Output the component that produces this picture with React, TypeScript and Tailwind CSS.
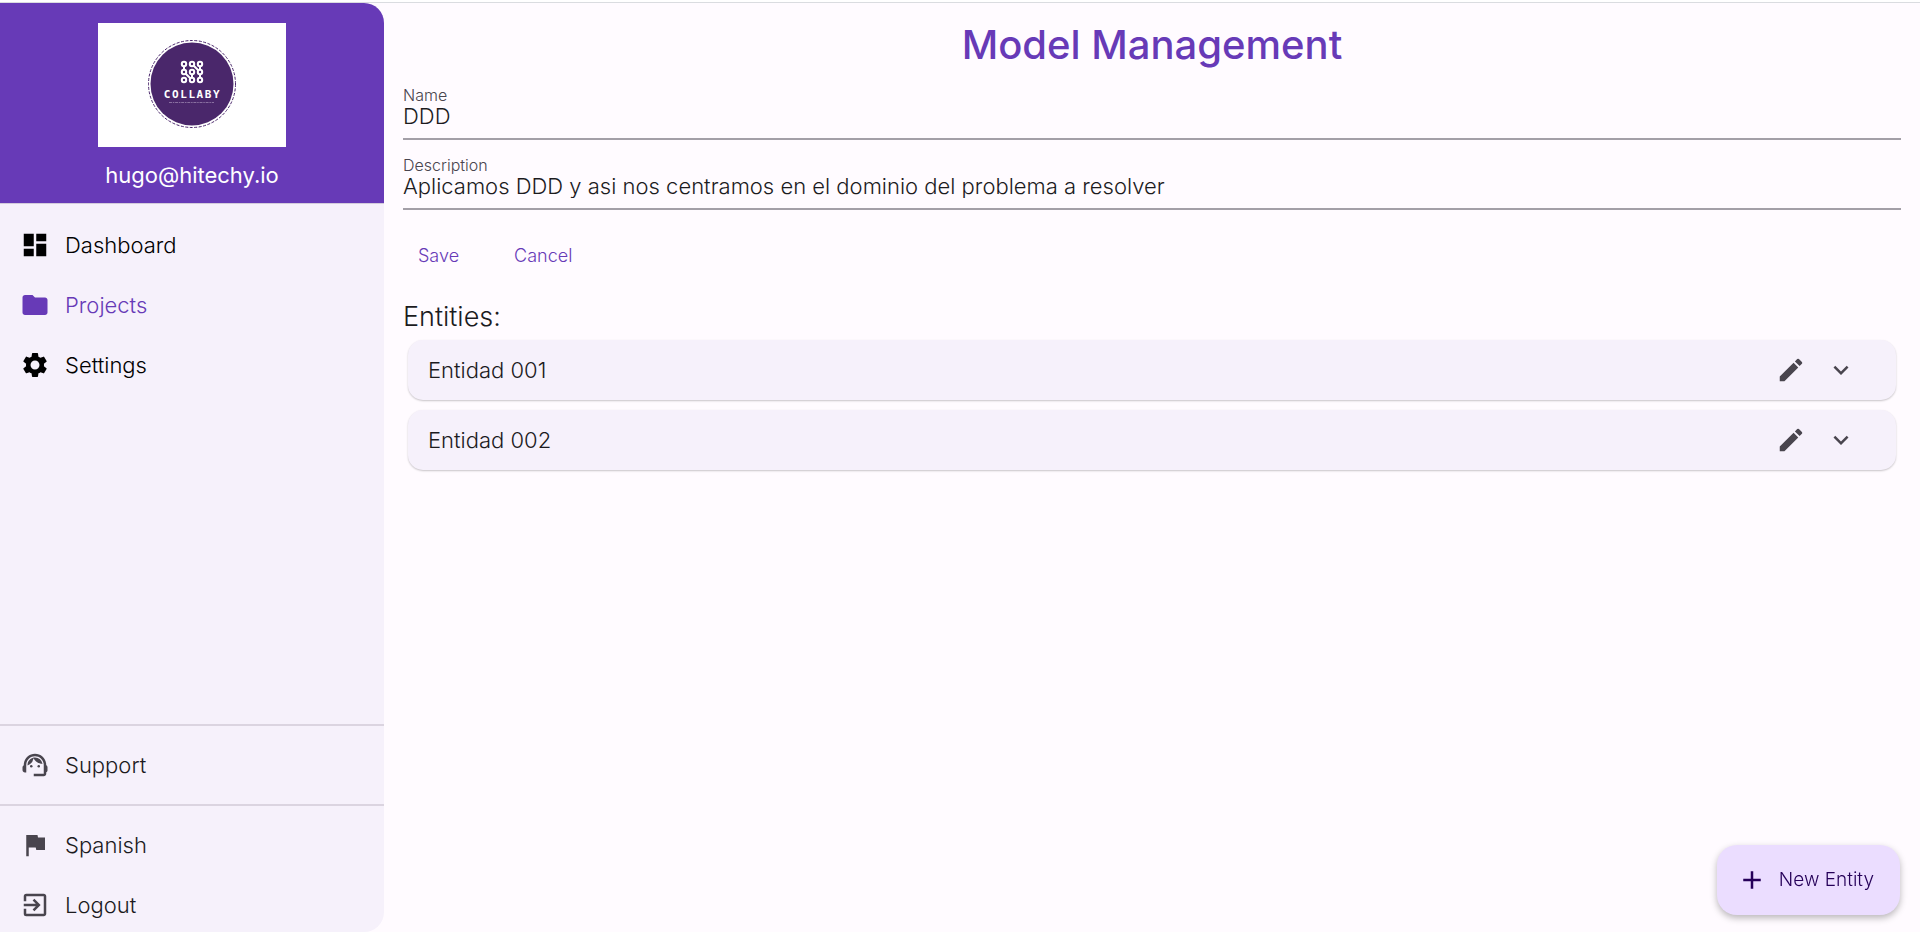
import { useState } from "react";
import type { IconType } from "react-icons";
import {
  MdAdd,
  MdDashboard,
  MdEdit,
  MdExitToApp,
  MdExpandMore,
  MdFlag,
  MdFolder,
  MdSettings,
  MdSupportAgent,
} from "react-icons/md";

function Logo() {
  return (
    <svg viewBox="0 0 188 124" className="h-[124px] w-[188px] bg-white" role="img" aria-label="Collaby">
      <circle cx="94" cy="61" r="43.5" fill="none" stroke="#4a276b" strokeWidth="1" strokeDasharray="3 1.5" />
      <circle cx="94" cy="61" r="41.5" fill="#4a276b" />
      <g fill="none" stroke="#fff" strokeWidth="2">
        {[41, 49, 57].map((cy) =>
          [86, 94, 102].map((cx) => <circle key={`${cx}-${cy}`} cx={cx} cy={cy} r="2.2" />),
        )}
        <path d="M86 43v4M95.500 42.500l5 5M102 43v4M87.500 50.500l5 5M94 51v4M102 51v4" />
      </g>
      <text
        x="94.5"
        y="75"
        textAnchor="middle"
        fill="#fff"
        fontFamily="'DejaVu Sans Mono', monospace"
        fontWeight="700"
        fontSize="11"
        letterSpacing="1.6"
      >
        COLLABY
      </text>
      <path d="M71 79.500H116" stroke="#a58fb8" strokeWidth="0.7" strokeDasharray="3 0.8 1.500 0.8" />
    </svg>
  );
}

type NavItemProps = { icon: IconType; label: string; tone: string; iconTone: string };

function NavItem({ icon: Icon, label, tone, iconTone }: NavItemProps) {
  return (
    <a href="#" className={`flex h-[60px] items-center gap-[15px] px-5 text-[22px] font-light ${tone}`}>
      <Icon size={30} className={iconTone} />
      {label}
    </a>
  );
}

function Sidebar() {
  return (
    <aside className="flex w-96 shrink-0 flex-col overflow-hidden rounded-r-[20px] bg-[#f6f1fb]">
      <header className="flex h-[201px] flex-col items-center gap-3 border-b border-[#d3cbdc] bg-[#673ab7] pt-5">
        <Logo />
        <p className="text-[22px] leading-8 text-white">hugo@hitechy.io</p>
      </header>
      <nav className="-mb-[3px] flex grow flex-col pt-[11px]">
        <NavItem icon={MdDashboard} label="Dashboard" tone="text-black" iconTone="text-black" />
        <NavItem icon={MdFolder} label="Projects" tone="text-[#673ab7]" iconTone="text-[#673ab7]" />
        <NavItem icon={MdSettings} label="Settings" tone="text-black" iconTone="text-black" />
        <div className="mt-auto border-y-2 border-[#dbd4e0] py-[9px]">
          <NavItem icon={MdSupportAgent} label="Support" tone="text-[#1c1b1e]" iconTone="text-[#49454e]" />
        </div>
        <div className="pt-[9px]">
          <NavItem icon={MdFlag} label="Spanish" tone="text-[#1c1b1e]" iconTone="text-[#49454e]" />
          <NavItem icon={MdExitToApp} label="Logout" tone="text-[#1c1b1e]" iconTone="text-[#49454e]" />
        </div>
      </nav>
    </aside>
  );
}

function Field({ id, label, initial }: { id: string; label: string; initial: string }) {
  const [value, setValue] = useState(initial);
  return (
    <div className="flex h-[54px] flex-col border-b-2 border-[#a39fa7]">
      <label htmlFor={id} className="text-[16px] leading-[18px] font-light text-[#49454e]">
        {label}
      </label>
      <input
        id={id}
        value={value}
        onChange={(event) => setValue(event.target.value)}
        className="h-6 w-full bg-transparent text-[22px] leading-6 font-light text-[#1c1b1e] outline-none"
      />
    </div>
  );
}

function EntityCard({ name }: { name: string }) {
  return (
    <li className="flex h-[60px] items-center rounded-[15px] bg-[#f6f1fb] pr-10 pl-5 text-[#49454e] shadow-[0_1px_2px_rgba(0,0,0,0.22)]">
      <span className="grow text-[22px] font-light text-[#1c1b1e]">{name}</span>
      <button type="button" aria-label={`Edit ${name}`} className="mr-5">
        <MdEdit size={30} />
      </button>
      <button type="button" aria-label={`Expand ${name}`}>
        <MdExpandMore size={30} />
      </button>
    </li>
  );
}

export default function App() {
  return (
    <div className="flex min-h-screen flex-col bg-[#fffbff] font-['Inter',sans-serif] text-[#1c1b1e]">
      <div className="h-[3px] border-b border-[#dadce0] bg-white" />
      <div className="flex grow">
        <Sidebar />
        <main className="min-w-0 grow px-[19px] pt-[18px]">
          <h1 className="text-center text-[40px] leading-[48px] font-medium text-[#673ab7]">Model Management</h1>
          <form className="mt-[17px]" onSubmit={(event) => event.preventDefault()}>
            <div className="flex flex-col gap-4">
              <Field id="model-name" label="Name" initial="DDD" />
              <Field
                id="model-description"
                label="Description"
                initial="Aplicamos DDD y asi nos centramos en el dominio del problema a resolver"
              />
            </div>
            <div className="mt-5 flex gap-[25px] text-[18px] font-light text-[#673ab7]">
              <button type="submit" className="h-[50px] px-[15px]">
                Save
              </button>
              <button type="button" className="h-[50px] px-[15px]">
                Cancel
              </button>
            </div>
          </form>
          <h2 className="mt-[21px] text-[27px] leading-8 font-light">Entities:</h2>
          <ul className="mt-[7px] flex flex-col gap-[10px] px-[5px]">
            <EntityCard name="Entidad 001" />
            <EntityCard name="Entidad 002" />
          </ul>
        </main>
      </div>
      <button
        type="button"
        className="fixed right-5 bottom-[17px] flex h-[70px] items-center gap-3 rounded-[20px] bg-[#ebddff] pr-[26px] pl-5 text-[19px] font-light text-[#250059] shadow-[0_3px_7px_rgba(0,0,0,0.28)]"
      >
        <MdAdd size={30} />
        New Entity
      </button>
    </div>
  );
}
